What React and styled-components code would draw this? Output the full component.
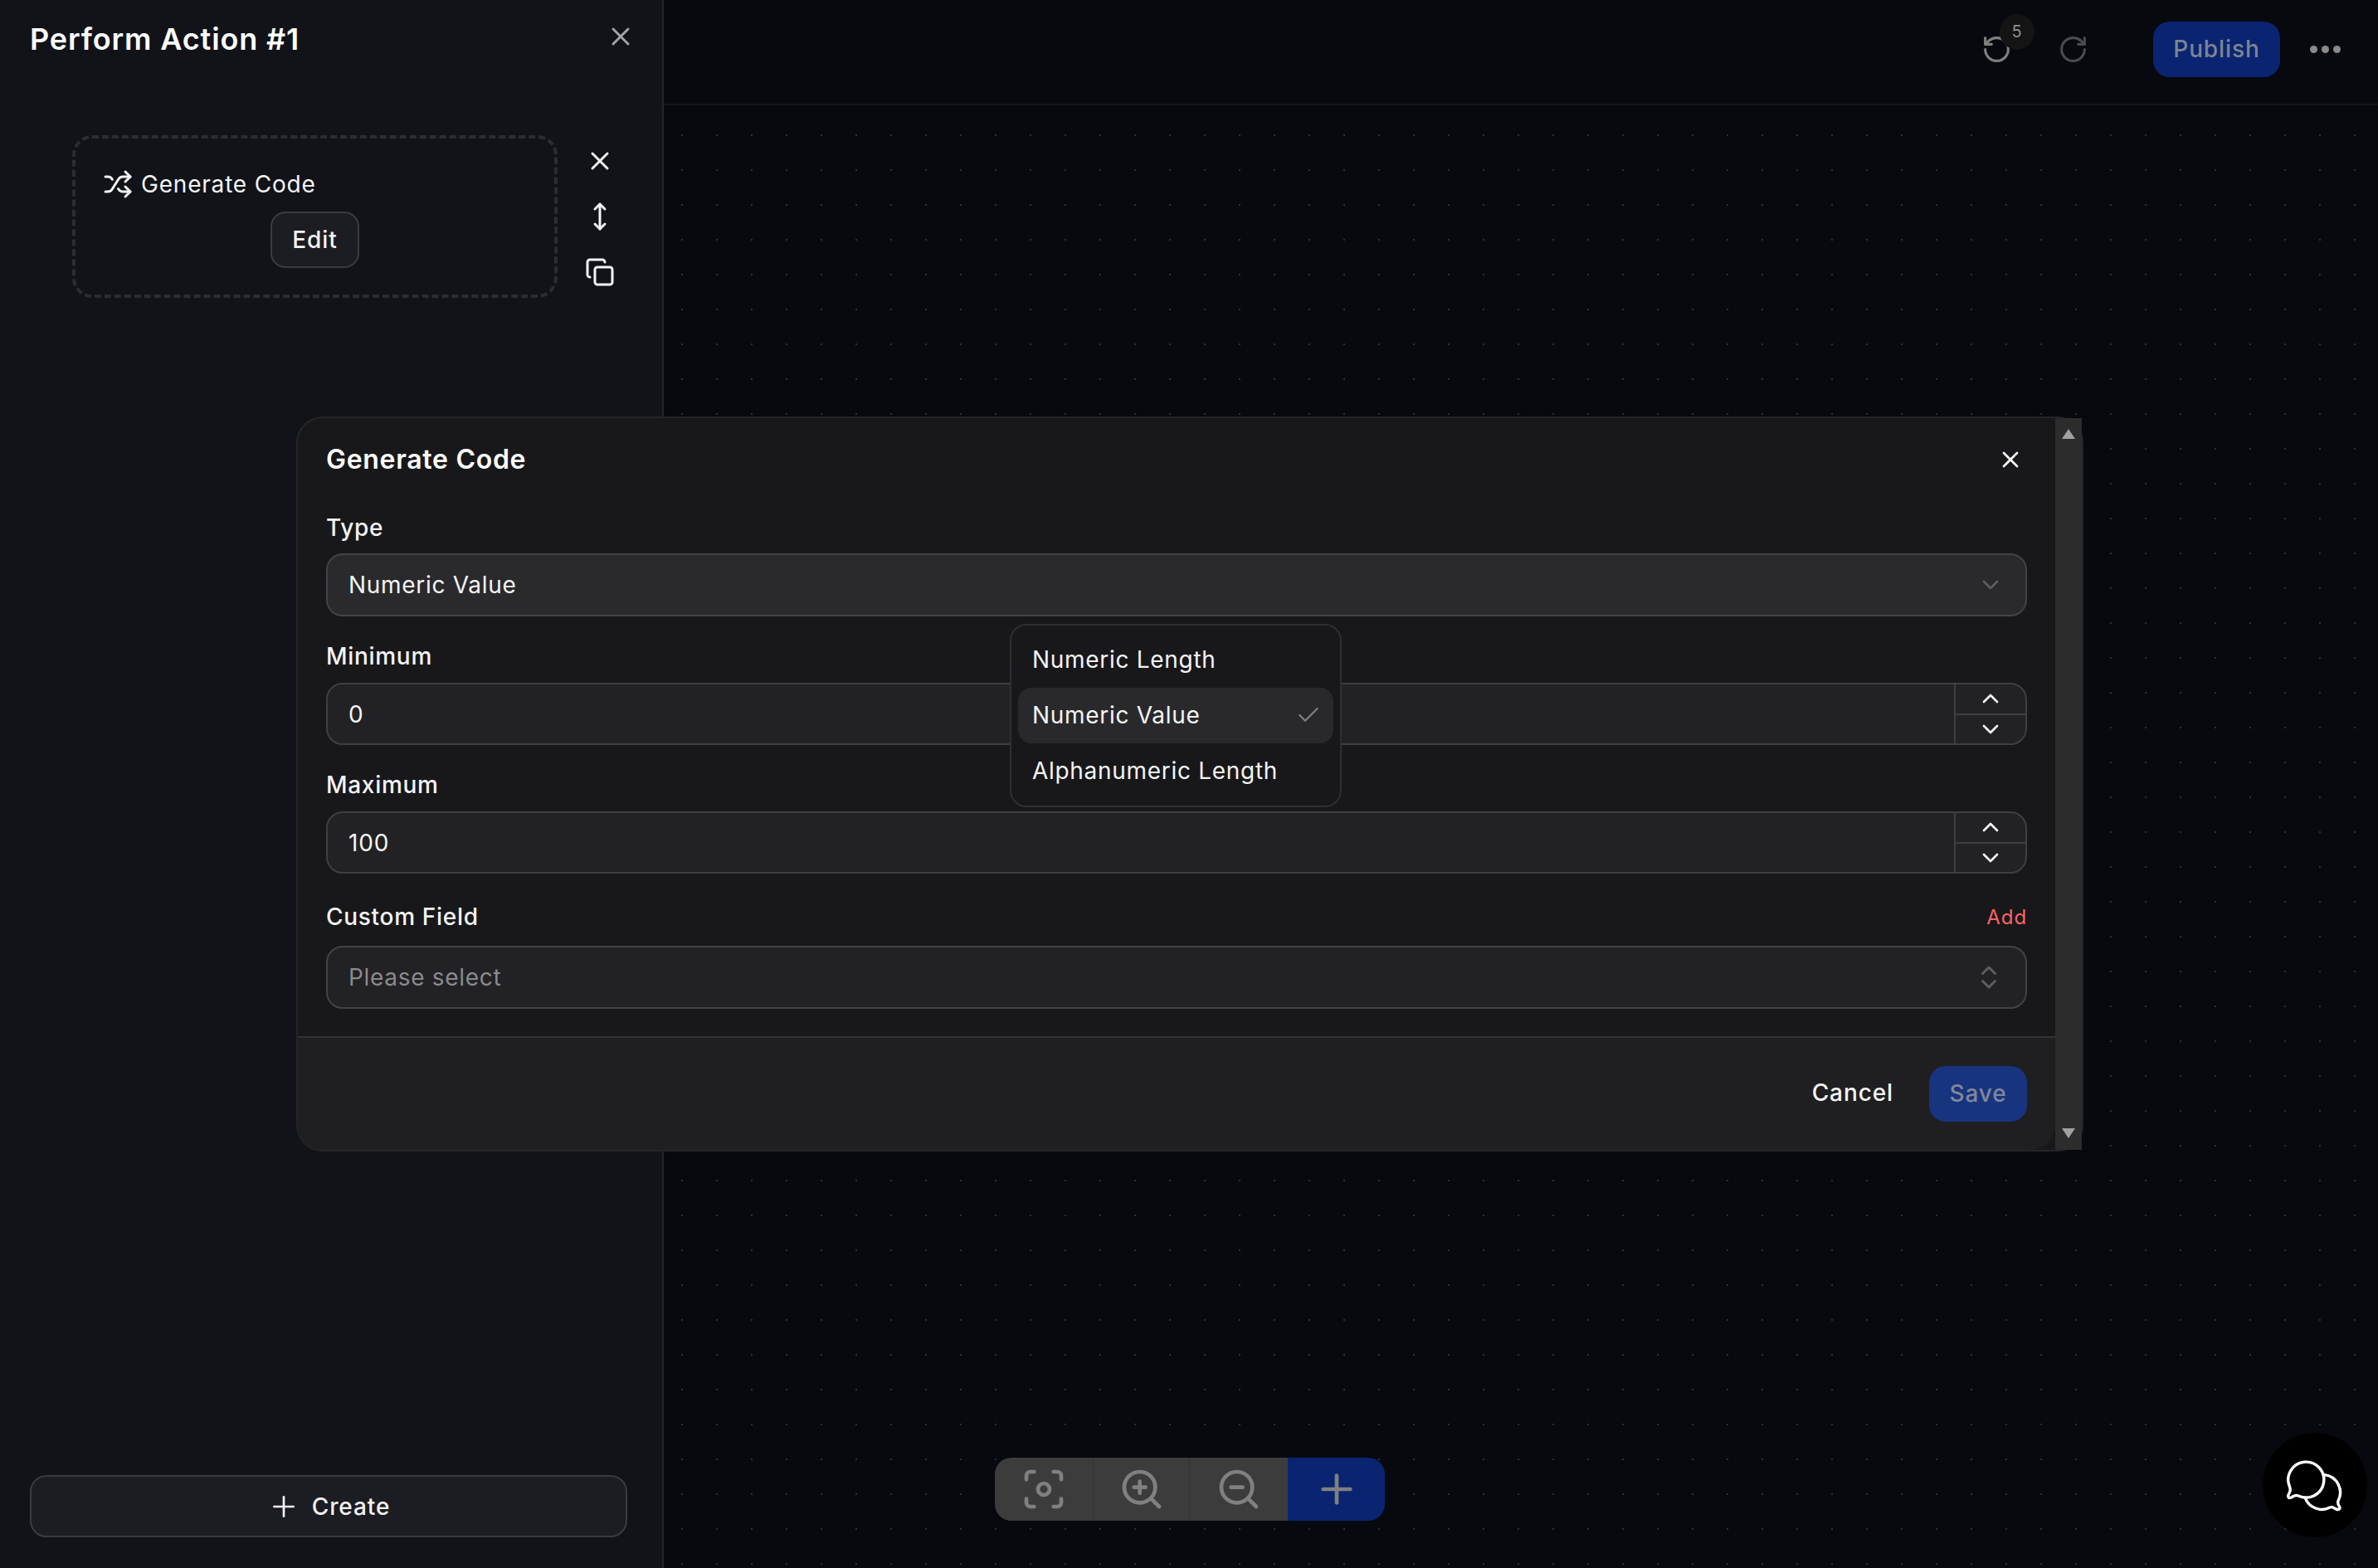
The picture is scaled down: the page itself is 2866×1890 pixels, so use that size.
import React from 'react';

import styled, { createGlobalStyle } from 'styled-components';
import {
  Check,
  ChevronDown,
  ChevronsUpDown,
  ChevronUp,
  Copy,
  Focus,
  MoveVertical,
  Plus,
  RotateCcw,
  RotateCw,
  Shuffle,
  X,
  ZoomIn,
  ZoomOut,
} from 'lucide-react';

const GlobalStyle = createGlobalStyle`
  html, body {
    margin: 0;
    padding: 0;
    background: #07090e;
    font-family: Inter, "Liberation Sans", sans-serif;
    letter-spacing: 0.7px;
    color: #fff;
  }

  * {
    box-sizing: border-box;
  }

  button, input {
    font-family: Inter, "Liberation Sans", sans-serif;
    font-size: 28px;
    letter-spacing: 0.9px;
  }
`;

const Page = styled.div`
  position: relative;
  display: flex;
  width: 100%;
  height: 100vh;
  overflow: hidden;
`;

/* left panel */
const Sidebar = styled.aside`
  flex: 0 0 800px;
  display: flex;
  flex-direction: column;
  padding: 0 42px 37px 36px;
  background: #111318;
  border-right: 2px solid #23252a;
`;

const SidebarHead = styled.div`
  display: flex;
  justify-content: space-between;
  align-items: center;
  height: 92px;
  margin-right: -10px;
  color: #a3a3a6;
`;

const SidebarTitle = styled.h1`
  margin: 2px 0 0 0;
  font-size: 36px;
  line-height: 56px;
  font-weight: 600;
  letter-spacing: 0.86px;
  color: #fff;
`;

const SidebarClose = styled(X)`
  margin-bottom: 4px;
`;

const ActionRow = styled.div`
  display: flex;
  margin: 71px 0 0 51px;
  flex: 1;
  align-items: flex-start;
`;

const ActionBox = styled.div`
  width: 585px;
  height: 196px;
  padding: 35px 33px;
  border: 4px dashed #2b2d32;
  border-radius: 24px;
`;

const ActionName = styled.div`
  display: flex;
  align-items: center;
  gap: 10px;
  font-size: 28px;
  line-height: 40px;
  letter-spacing: 0.8px;
  color: #f4f4f5;
`;

const EditButton = styled.button`
  display: block;
  width: 107px;
  height: 68px;
  margin: 13px auto 0;
  font-weight: 500;
  color: #f4f4f5;
  background: #1c1d22;
  border: 2px solid #3a3b40;
  border-radius: 18px;
`;

const ActionTools = styled.div`
  display: flex;
  flex-direction: column;
  align-items: center;
  gap: 31px;
  margin: 13px 0 0 33px;
  color: #f4f4f5;

  svg {
    display: block;
  }
`;

const CreateButton = styled.button`
  display: flex;
  justify-content: center;
  align-items: center;
  gap: 14px;
  width: 720px;
  height: 75px;
  font-weight: 500;
  color: #f4f4f5;
  background: #1c1d22;
  border: 2px solid #3a3b40;
  border-radius: 20px;
`;

/* canvas side */
const Main = styled.main`
  position: relative;
  flex: 1;
  display: flex;
  flex-direction: column;
`;

const Topbar = styled.header`
  display: flex;
  justify-content: flex-end;
  align-items: center;
  height: 127px;
  padding: 0 45px 7px 0;
  background: #07090e;
  border-bottom: 2px solid #14161a;
`;

const HistoryButton = styled.div`
  position: relative;
  width: 37px;
  height: 37px;
  margin-right: ${(p) => p.$gap}px;
  color: ${(p) => p.$color};

  svg {
    display: block;
  }
`;

const Badge = styled.span`
  position: absolute;
  left: 22px;
  top: -24px;
  width: 42px;
  height: 43px;
  display: flex;
  justify-content: center;
  align-items: center;
  font-size: 20px;
  color: #8b9096;
  background: #141414;
  border-radius: 50%;
`;

const PublishButton = styled.button`
  width: 153px;
  height: 67px;
  margin-right: 36px;
  font-weight: 500;
  color: #7d8493;
  background: #0a2472;
  border: 0;
  border-radius: 20px;
`;

const MoreDots = styled.div`
  display: flex;
  gap: 5px;

  span {
    width: 9px;
    height: 9px;
    border-radius: 50%;
    background: #8a8a8a;
  }
`;

const Canvas = styled.div`
  flex: 1;
  background-color: #07090e;
  background-image: radial-gradient(circle at 1px 1px, #2e3034 1px, transparent 1.2px);
  background-size: 42px 42px;
  background-position: 21px 35px;
`;

const ZoomBar = styled.div`
  position: absolute;
  left: 399px;
  bottom: 57px;
  display: grid;
  grid-template-columns: 119px 116px 118px 117px;
  height: 76px;
  border-radius: 20px;
  overflow: hidden;
`;

const ZoomCell = styled.div`
  display: flex;
  justify-content: center;
  align-items: center;
  color: #808080;
  background: ${(p) => (p.$primary ? '#0a2472' : '#3c3c3c')};
  border-right: ${(p) => (p.$divider ? '1px solid #333' : '0')};
`;

const ChatButton = styled.div`
  position: absolute;
  right: 13px;
  bottom: 37px;
  width: 126px;
  height: 126px;
  display: flex;
  justify-content: center;
  align-items: center;
  background: #000;
  border-radius: 50%;
`;

/* dialog */
const Modal = styled.section`
  position: absolute;
  left: 357px;
  top: 502px;
  display: flex;
  width: 2154px;
  background: #18181a;
  border: 2px solid #242528;
  border-radius: 32px;
`;

const ModalContent = styled.div`
  position: relative;
  flex: 1;
  min-width: 0;
`;

const ModalBody = styled.div`
  padding: 28px 34px 33px;
`;

const ModalHead = styled.div`
  display: flex;
  justify-content: space-between;
  align-items: center;
  height: 44px;
  margin-bottom: 40px;
  color: #fff;
`;

const ModalTitle = styled.h2`
  margin: 0;
  font-size: 32px;
  line-height: 44px;
  font-weight: 600;
`;

const CloseSlot = styled.div`
  display: flex;
  margin-right: 4px;
`;

const Field = styled.div`
  margin-top: ${(p) => p.$top || 0}px;
`;

const LabelRow = styled.div`
  display: flex;
  justify-content: space-between;
  align-items: center;
  height: 40px;
  margin-bottom: ${(p) => p.$gap}px;
`;

const Label = styled.label`
  font-size: 28px;
  font-weight: 500;
  color: #f4f4f5;
`;

const AddLink = styled.span`
  font-size: 24px;
  font-weight: 400;
  letter-spacing: 0.9px;
  color: #ff6363;
`;

const Select = styled.div`
  display: flex;
  justify-content: space-between;
  align-items: center;
  height: 76px;
  padding: 0 26px 0 25px;
  font-size: 28px;
  color: ${(p) => (p.$placeholder ? '#8a8a8e' : '#f4f4f5')};
  background: ${(p) => (p.$placeholder ? '#222224' : '#2a2a2c')};
  border: 2px solid #434345;
  border-radius: 20px;

  svg {
    color: #5c5c61;
  }
`;

const NumberBox = styled.div`
  display: flex;
  height: 75px;
  background: #222224;
  border: 2px solid #3f3f42;
  border-radius: 20px;
  overflow: hidden;
`;

const NumberInput = styled.input`
  flex: 1;
  min-width: 0;
  padding: 0 25px;
  font-weight: 400;
  color: #f4f4f5;
  background: transparent;
  border: 0;
  outline: 0;
`;

const Stepper = styled.div`
  flex: 0 0 86px;
  display: flex;
  flex-direction: column;
  border-left: 2px solid #3f3f42;
`;

const StepButton = styled.div`
  flex: 1;
  display: flex;
  justify-content: center;
  align-items: center;
  color: #f4f4f5;

  & + & {
    border-top: 2px solid #3f3f42;
  }
`;

const ModalFooter = styled.div`
  display: flex;
  justify-content: flex-end;
  align-items: center;
  gap: 43px;
  padding: 34px;
  background: #1f1f21;
  border-top: 2px solid #333336;
  border-bottom-left-radius: 30px;
  border-bottom-right-radius: 30px;
`;

const CancelButton = styled.button`
  padding: 0 0 3px;
  font-weight: 500;
  color: #f4f4f5;
  background: none;
  border: 0;
`;

const SaveButton = styled.button`
  width: 118px;
  height: 67px;
  padding: 0 0 2px;
  font-weight: 500;
  color: #7f879b;
  background: #18347f;
  border: 0;
  border-radius: 20px;
`;

const Scrollbar = styled.div`
  flex: 0 0 32px;
  display: flex;
  flex-direction: column;
  justify-content: space-between;
  align-items: center;
  padding: 13px 0 14px;
  background: #2c2c2c;
`;

const Arrow = styled.span`
  width: 0;
  height: 0;
  border-left: 8px solid transparent;
  border-right: 8px solid transparent;
  border-bottom: ${(p) => (p.$down ? '0' : '12px solid #a0a0a0')};
  border-top: ${(p) => (p.$down ? '12px solid #a0a0a0' : '0')};
`;

const Menu = styled.ul`
  position: absolute;
  left: 858px;
  top: 248px;
  width: 400px;
  margin: 0;
  padding: 8px;
  list-style: none;
  background: #18181a;
  border: 2px solid #2e2f33;
  border-radius: 20px;
`;

const MenuItem = styled.li`
  display: flex;
  justify-content: space-between;
  align-items: center;
  height: 67px;
  padding: 0 14px 2px 17px;
  font-size: 28px;
  color: #f4f4f5;
  background: ${(p) => (p.$selected ? '#29292b' : 'transparent')};
  border-radius: 16px;

  svg {
    color: #818187;
  }
`;

function NumberField({ value }) {
  return (
    <NumberBox>
      <NumberInput readOnly value={value} />
      <Stepper>
        <StepButton>
          <ChevronUp size={32} />
        </StepButton>
        <StepButton>
          <ChevronDown size={32} />
        </StepButton>
      </Stepper>
    </NumberBox>
  );
}

function ChatIcon() {
  return (
    <svg width="70" height="66" viewBox="90 67 70 66" fill="none" stroke="#fff" strokeWidth="3.4" strokeLinejoin="round" strokeLinecap="round">
      <path d="M94.5 102A21.5 21.5 0 1 1 105 113C101 111.5 100 113 96.5 115C93.5 116.5 92 114.5 93 112C95 108 96 106 94.5 102Z" />
      <path d="M136.5 87.6A21.5 21.5 0 0 1 153 119C152 122.5 153 124 154.5 126C156 128.5 154 130 151.5 129.3C148 128 146 125.5 143 127A21.5 21.5 0 0 1 113 115" />
    </svg>
  );
}

export default function App() {
  return (
    <Page>
      <GlobalStyle />
      <Sidebar>
        <SidebarHead>
          <SidebarTitle>Perform Action #1</SidebarTitle>
          <SidebarClose size={36} />
        </SidebarHead>
        <ActionRow>
          <ActionBox>
            <ActionName>
              <Shuffle size={36} />
              Generate Code
            </ActionName>
            <EditButton>Edit</EditButton>
          </ActionBox>
          <ActionTools>
            <X size={36} />
            <MoveVertical size={36} />
            <Copy size={36} />
          </ActionTools>
        </ActionRow>
        <CreateButton>
          <Plus size={40} strokeWidth={1.6} />
          Create
        </CreateButton>
      </Sidebar>

      <Main>
        <Topbar>
          <HistoryButton $gap={55} $color="#7f7f7f">
            <RotateCcw size={37} />
            <Badge>5</Badge>
          </HistoryButton>
          <HistoryButton $gap={78} $color="#4b4b4d">
            <RotateCw size={37} />
          </HistoryButton>
          <PublishButton>Publish</PublishButton>
          <MoreDots>
            <span />
            <span />
            <span />
          </MoreDots>
        </Topbar>
        <Canvas />
        <ZoomBar>
          <ZoomCell $divider>
            <Focus size={56} />
          </ZoomCell>
          <ZoomCell $divider>
            <ZoomIn size={56} />
          </ZoomCell>
          <ZoomCell>
            <ZoomOut size={56} />
          </ZoomCell>
          <ZoomCell $primary>
            <Plus size={56} />
          </ZoomCell>
        </ZoomBar>
        <ChatButton>
          <ChatIcon />
        </ChatButton>
      </Main>

      <Modal>
        <ModalContent>
          <ModalBody>
            <ModalHead>
              <ModalTitle>Generate Code</ModalTitle>
              <CloseSlot>
                <X size={32} />
              </CloseSlot>
            </ModalHead>
            <Field>
              <LabelRow $gap={11}>
                <Label>Type</Label>
              </LabelRow>
              <Select>
                Numeric Value
                <ChevronDown size={32} />
              </Select>
            </Field>
            <Field $top={28}>
              <LabelRow $gap={12}>
                <Label>Minimum</Label>
              </LabelRow>
              <NumberField value="0" />
            </Field>
            <Field $top={28}>
              <LabelRow $gap={12}>
                <Label>Maximum</Label>
              </LabelRow>
              <NumberField value="100" />
            </Field>
            <Field $top={32}>
              <LabelRow $gap={15}>
                <Label>Custom Field</Label>
                <AddLink>Add</AddLink>
              </LabelRow>
              <Select $placeholder>
                Please select
                <ChevronsUpDown size={36} />
              </Select>
            </Field>
          </ModalBody>
          <ModalFooter>
            <CancelButton>Cancel</CancelButton>
            <SaveButton>Save</SaveButton>
          </ModalFooter>
          <Menu>
            <MenuItem>Numeric Length</MenuItem>
            <MenuItem $selected>
              Numeric Value
              <Check size={32} strokeWidth={1.6} />
            </MenuItem>
            <MenuItem>Alphanumeric Length</MenuItem>
          </Menu>
        </ModalContent>
        <Scrollbar>
          <Arrow />
          <Arrow $down />
        </Scrollbar>
      </Modal>
    </Page>
  );
}
